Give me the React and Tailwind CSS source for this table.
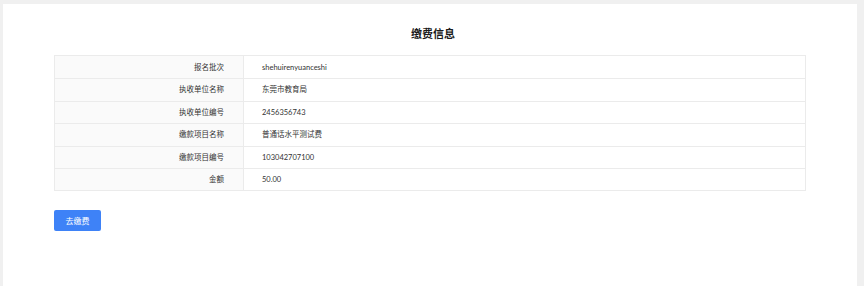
const ROWS = [
  ["报名批次", "shehuirenyuanceshi"],
  ["执收单位名称", "东莞市教育局"],
  ["执收单位编号", "2456356743"],
  ["缴款项目名称", "普通话水平测试费"],
  ["缴款项目编号", "103042707100"],
  ["金额", "50.00"],
];

export default function App() {
  return (
    <div
      className="w-[864px] h-[286px] bg-[#f0f0f0] pl-[3px] pt-[4px] overflow-hidden"
      style={{ fontFamily: 'Lato, "Noto Sans CJK SC", sans-serif' }}
    >
      <div className="w-[854px] h-[282px] bg-white pt-[23px] pl-[51px] pr-[51px]">
        <h2 className="text-center text-[11px] leading-[13px] font-bold text-[#1a1a1a] pl-[6px]">
          缴费信息
        </h2>
        <div className="mt-[15px] border border-[#ebebeb]">
          {ROWS.map(([label, value], i) => (
            <div
              key={label}
              className={`flex h-[22.4px] text-[7.5px] text-[#333] ${
                i > 0 ? "border-t border-[#ebebeb]" : ""
              }`}
            >
              <div className="w-[189px] bg-[#fafafa] border-r border-[#ebebeb] flex items-center justify-end pr-[19px]">
                {label}
              </div>
              <div className="flex-1 flex items-center pl-[18px]">{value}</div>
            </div>
          ))}
        </div>
        <button className="mt-[19px] w-[47px] h-[21px] bg-[#3e82f7] text-white text-[8px] rounded-[2px] flex items-center justify-center">
          去缴费
        </button>
      </div>
    </div>
  );
}
